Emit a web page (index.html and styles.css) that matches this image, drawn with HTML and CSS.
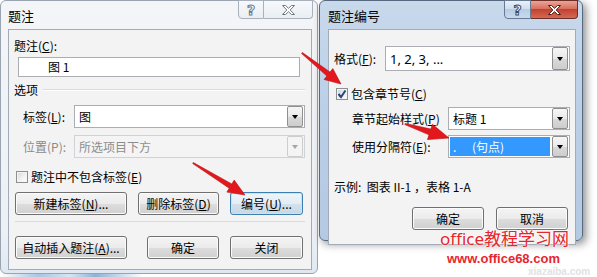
FILE: index.html
```html
<!DOCTYPE html>
<html lang="zh-CN">
<head>
    <meta charset="UTF-8">
    <title>题注编号</title>
    <link rel="stylesheet" href="styles.css">
</head>
<body>
    <div class="desktop">
        <!-- 题注 -->
        <div class="window window-caption">
            <div class="titlebar">
                <span class="title">题注</span>
                <div class="caption-buttons">
                    <span class="cap-btn cap-help">?</span>
                    <span class="cap-btn cap-close">
                        <svg width="13" height="10" viewBox="0 0 13 10"><polygon points="0.5,0.5 3.5,0.5 6.5,3.3 9.5,0.5 12.5,0.5 8.2,5 12.5,9.5 9.5,9.5 6.5,6.7 3.5,9.5 0.5,9.5 4.8,5"/></svg>
                    </span>
                </div>
            </div>
            <div class="client client-left">
                <div class="text-row">题注(<u>C</u>):</div>
                <div class="caption-input">图 1</div>
                <div class="group-title"><span>选项</span><i class="etched"></i></div>
                <div class="field-row">
                    <span class="field-label">标签(<u>L</u>):</span>
                    <div class="combo"><span class="combo-text">图</span><span class="combo-btn"></span></div>
                </div>
                <div class="field-row field-row-tight">
                    <span class="field-label disabled">位置(P):</span>
                    <div class="combo combo-disabled"><span class="combo-text">所选项目下方</span><span class="combo-btn"></span></div>
                </div>
                <div class="check-row">
                    <span class="checkbox"></span>
                    <span>题注中不包含标签(<u>E</u>)</span>
                </div>
                <div class="button-row">
                    <button class="btn btn-wide">新建标签(<u>N</u>)...</button>
                    <button class="btn btn-mid">删除标签(<u>D</u>)</button>
                    <button class="btn btn-num btn-focus">编号(<u>U</u>)...</button>
                </div>
                <div class="separator"></div>
                <div class="button-row button-row-bottom">
                    <button class="btn btn-wide">自动插入题注(<u>A</u>)...</button>
                    <button class="btn btn-ok">确定</button>
                    <button class="btn btn-num">关闭</button>
                </div>
            </div>
        </div>

        <!-- 题注编号 -->
        <div class="window window-number">
            <div class="titlebar">
                <span class="title">题注编号</span>
                <div class="caption-buttons">
                    <span class="cap-btn cap-help">?</span>
                    <span class="cap-btn cap-close">
                        <svg width="13" height="10" viewBox="0 0 13 10"><polygon points="0.5,0.5 3.5,0.5 6.5,3.3 9.5,0.5 12.5,0.5 8.2,5 12.5,9.5 9.5,9.5 6.5,6.7 3.5,9.5 0.5,9.5 4.8,5"/></svg>
                    </span>
                </div>
            </div>
            <div class="client client-right">
                <div class="field-row format-row">
                    <span class="field-label">格式(<u>F</u>):</span>
                    <div class="combo combo-tall"><span class="combo-text latin">1, 2, 3, ...</span><span class="combo-btn"></span></div>
                </div>
                <div class="check-row check-chapter">
                    <span class="checkbox checked">
                        <svg width="10" height="10" viewBox="0 0 10 10"><polyline points="1.5,5 4,8 8.5,1.5"/></svg>
                    </span>
                    <span>包含章节号(<u>C</u>)</span>
                </div>
                <div class="field-row chapter-row">
                    <span class="field-label">章节起始样式(<u>P</u>)</span>
                    <div class="combo"><span class="combo-text">标题 1</span><span class="combo-btn"></span></div>
                </div>
                <div class="field-row chapter-row sep-row">
                    <span class="field-label">使用分隔符(<u>E</u>):</span>
                    <div class="combo"><span class="combo-text selected"><b>.</b>(句点)</span><span class="combo-btn"></span></div>
                </div>
                <div class="text-row example">示例:&nbsp; 图表 II-1 ，表格 1-A</div>
                <div class="button-row button-row-right">
                    <button class="btn btn-ok">确定</button>
                    <button class="btn btn-ok">取消</button>
                </div>
            </div>
        </div>

        <svg class="arrows" width="597" height="277" viewBox="0 0 597 277">
            <polygon points="301.6,53.5 326.9,76 324.1,79.5 341,84 332.8,68.6 330,72.1 302.4,52.5"/>
            <polygon points="192.7,163.5 229.2,188.2 226.9,192.1 245,195 234.2,180.1 231.8,184 193.3,162.5"/>
            <polygon points="404.8,124.6 429,134.8 427.5,139.6 449,138 432.4,124.3 430.9,129.1 405.2,123.4"/>
        </svg>

        <div class="wm-faint">xiazaiba.com</div>
        <div class="watermark">
            <div class="wm-title">office教程学习网</div>
            <div class="wm-url">www.office68.com</div>
        </div>
    </div>
</body>
</html>
```

FILE: styles.css
```css
* {
    margin: 0;
    padding: 0;
    box-sizing: border-box;
}

body {
    font-family: "Noto Sans CJK SC", "Noto Sans", sans-serif;
    font-size: 12px;
    color: #000;
    background: #fff;
}

.desktop {
    position: relative;
    width: 597px;
    height: 277px;
    overflow: hidden;
    background:
        linear-gradient(to right, rgba(255,255,255,0) 0, #a9c6e2 12%, #d7e5f2 22%, #8fb3d8 30%, rgba(255,255,255,0) 45%) left bottom / 318px 5px no-repeat,
        #fff;
}

u {
    text-decoration: underline;
    text-underline-offset: 1px;
}

/* windows */
.window {
    position: absolute;
    top: 0;
    display: flex;
    flex-direction: column;
    border-radius: 6px;
}

.window-caption {
    left: 0;
    width: 318px;
    height: 274px;
    border: 1px solid #9aa4b1;
    background: linear-gradient(to bottom, #f3f5f8 0%, #edf1f5 85%, #dfe8f1 100%);
}

.window-number {
    left: 319px;
    width: 264px;
    height: 241px;
    border: 1px solid #56697f;
    background: linear-gradient(to bottom, #c9d9ec 0%, #bcd0e7 40%, #b4c9e2 100%);
    box-shadow: 3px 3px 8px rgba(0,0,0,0.45);
}

.titlebar {
    height: 28px;
    display: flex;
    justify-content: space-between;
    flex-shrink: 0;
}

.title {
    align-self: center;
    font-size: 13px;
    line-height: 16px;
    padding-left: 7px;
    margin-top: 1px;
}

.window-number .title {
    padding-left: 8px;
}

.caption-buttons {
    display: flex;
    height: 19px;
    margin-right: 4px;
    margin-top: -1px;
}

.cap-btn {
    display: flex;
    align-items: center;
    justify-content: center;
    height: 19px;
    font-family: "DejaVu Sans", sans-serif;
    font-weight: bold;
    font-size: 14px;
}

.cap-help {
    width: 26px;
    border-radius: 0 0 0 4px;
}

.cap-close {
    width: 49px;
    border-radius: 0 0 4px 0;
}

.window-caption .cap-btn {
    border: 1px solid #a8b1bc;
    background: linear-gradient(to bottom, #f7f9fb, #eaeef2);
    color: #fff;
    -webkit-text-stroke: 1px #707a85;
}

.window-caption .cap-close {
    border-left: none;
}

.window-caption .cap-close polygon {
    fill: #fff;
    stroke: #6f7882;
    stroke-width: 1;
}

.window-number .cap-help {
    width: 27px;
    border: 1px solid #667a92;
    background: linear-gradient(to bottom, #e8f0f9 0%, #d0dff0 45%, #b8cce4 50%, #c9daee 100%);
    color: #fff;
    -webkit-text-stroke: 1px #3d4a5a;
}

.window-number .cap-close {
    width: 47px;
    border: 1px solid #6c2f28;
    border-left: none;
    background: linear-gradient(to bottom, #eaa596 0%, #d8705f 45%, #c2412f 50%, #d36a55 100%);
}

.window-number .cap-close polygon {
    fill: #fff;
    stroke: #4a1d18;
    stroke-width: 1;
}

/* client area */
.client {
    border: 1px solid #a2acb8;
    background: #f3f3f3;
}

.client-left {
    margin: 0 5px 0 7px;
    padding: 8px 0 10px;
}

.client-right {
    margin: 0 6px 3px 8px;
    padding: 8px 0 14px;
}

.text-row {
    line-height: 16px;
    height: 16px;
    padding-left: 5px;
}

.caption-input {
    margin: 3px 0 0 9px;
    width: 282px;
    height: 20px;
    border: 1px solid #abadb3;
    background: #fff;
    line-height: 18px;
    padding-left: 29px;
}

.group-title {
    display: flex;
    align-items: center;
    height: 16px;
    margin-top: 4px;
    padding: 0 6px 0 5px;
}

.etched {
    flex: 1;
    margin-left: 5px;
    margin-top: 1px;
    border-top: 1px solid #d5dde4;
    border-bottom: 1px solid #fff;
}

.field-row {
    display: flex;
    align-items: center;
    margin-top: 8px;
    padding: 0 6px 0 14px;
}

.field-row-tight {
    margin-top: 7px;
}

.field-label {
    width: 51px;
    flex-shrink: 0;
    line-height: 16px;
}

.field-label.disabled {
    color: #8a8a8a;
}

.combo {
    flex: 1;
    display: flex;
    height: 23px;
    border: 1px solid #abadb3;
    background: #fff;
}

.combo-tall {
    height: 25px;
}

.combo-text {
    flex: 1;
    padding-left: 4px;
    display: flex;
    align-items: center;
}

.latin {
    font-family: "Noto Sans", "Noto Sans CJK SC", sans-serif;
    font-size: 13px;
}

.combo-btn {
    width: 16px;
    margin: 0 1px 0 0;
    border: 1px solid #8f8f8f;
    border-radius: 2px;
    background: linear-gradient(to bottom, #f6f6f6 0%, #e9e9e9 50%, #d9d9d9 51%, #cdcdcd 100%);
    display: flex;
    align-items: center;
    justify-content: center;
}

.combo-btn::after {
    content: "";
    border-left: 3.5px solid transparent;
    border-right: 3.5px solid transparent;
    border-top: 4px solid #000;
}

.combo-disabled {
    border-color: #cfd2d6;
    background: #f4f4f4;
    color: #8d8d8d;
}

.combo-disabled .combo-btn {
    border-color: #cdcdcd;
    background: #f4f4f4;
}

.combo-disabled .combo-btn::after {
    border-top-color: #a6a6a6;
}

.check-row {
    display: flex;
    align-items: center;
    height: 14px;
    margin-top: 12px;
    padding-left: 7px;
    line-height: 16px;
}

.checkbox {
    width: 12px;
    height: 12px;
    margin-right: 3px;
    border: 1px solid #8e8f8f;
    background: linear-gradient(135deg, #d6d6d6 0%, #f4f4f4 60%, #fff 100%);
    box-shadow: inset 0 0 0 1px #f4f4f4;
    display: flex;
    align-items: center;
    justify-content: center;
}

.checkbox.checked {
    background: linear-gradient(135deg, #c9d3e0 0%, #eef2f7 70%, #fff 100%);
}

.checkbox polyline {
    fill: none;
    stroke: #2d4478;
    stroke-width: 2;
}

.button-row {
    display: flex;
    margin-top: 8px;
    padding-left: 6px;
}

.button-row-bottom {
    margin-top: 14px;
}

.btn {
    height: 23px;
    border: 1px solid #707070;
    border-radius: 3px;
    background: linear-gradient(to bottom, #f4f4f4 0%, #ebebeb 50%, #dddddd 51%, #d0d0d0 100%);
    box-shadow: inset 0 0 0 1px #fbfbfb;
    font-family: "Noto Sans CJK SC", "Noto Sans", sans-serif;
    font-size: 12px;
    color: #000;
    line-height: 16px;
}

.btn-wide {
    width: 112px;
}

.btn-mid {
    width: 81px;
    margin-left: 11px;
}

.btn-ok {
    width: 72px;
    margin-left: 20px;
}

.btn-num {
    width: 73px;
    margin-left: 11px;
}

.btn-focus {
    border-color: #3c7fb1;
    box-shadow: inset 0 0 0 1px #c4e5f6;
    background: linear-gradient(to bottom, #eef5fa 0%, #e3edf4 50%, #d3e1eb 51%, #c7d8e5 100%);
}

.separator {
    margin: 6px 6px 0;
    height: 1px;
    background: #dcdcdc;
}

/* 题注编号 */
.format-row {
    padding: 0 5px;
}

.check-chapter {
    margin-top: 16px;
}

.chapter-row {
    margin-top: 6px;
    padding: 0 5px 0 23px;
}

.chapter-row .field-label {
    width: 96px;
}

.sep-row {
    margin-top: 5px;
}

.combo-text.selected {
    flex: 0 0 auto;
    width: 100px;
    margin: 1px 0 1px 1px;
    padding-left: 3px;
    background: #3399ff;
    color: #fff;
}

.combo-text.selected b {
    font-weight: normal;
    width: 19px;
}

.sep-row .combo-text.selected + .combo-btn {
    margin-left: auto;
}

.example {
    margin-top: 21px;
}

.button-row-right {
    justify-content: flex-end;
    margin-top: 12px;
    padding-right: 7px;
}

.button-row-right .btn-ok {
    margin-left: 12px;
}

/* overlays */
.arrows {
    position: absolute;
    left: 0;
    top: 0;
}

.arrows polygon {
    fill: #e3181c;
    stroke: #b80f12;
    stroke-width: 0.6;
}

.watermark {
    position: absolute;
    left: 440px;
    top: 229px;
    color: #e8252c;
    text-shadow: 0 0 2px #fff, 0 0 2px #fff;
}

.wm-title {
    font-family: "Noto Sans", "Noto Sans CJK SC", sans-serif;
    font-size: 17px;
    line-height: 20px;
}

.wm-url {
    margin: 2px 0 0 7px;
    font-family: "Liberation Sans", sans-serif;
    font-weight: bold;
    font-size: 13px;
    line-height: 15px;
}

.wm-faint {
    position: absolute;
    left: 528px;
    top: 266px;
    font-family: "Liberation Sans", sans-serif;
    font-weight: bold;
    font-size: 10px;
    line-height: 11px;
    color: #e2e2e2;
}
```
